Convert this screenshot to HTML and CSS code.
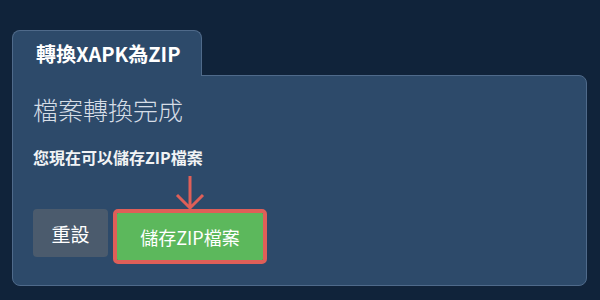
FILE: index.html
```html
<!DOCTYPE html>
<html lang="zh-Hant">
<head>
    <meta charset="UTF-8">
    <meta name="viewport" content="width=device-width, initial-scale=1.0">
    <title>轉換XAPK為ZIP</title>
    <link rel="stylesheet" href="styles.css">
</head>
<body>
    <div class="tabs">
        <div class="tab active">轉換XAPK為ZIP</div>
    </div>
    <div class="panel">
        <h2 class="done-title">檔案轉換完成</h2>
        <p class="done-desc">您現在可以儲存ZIP檔案</p>
        <div class="btn-row">
            <button type="button" class="btn btn-reset">重設</button>
            <div class="highlight">
                <svg class="hint-arrow" width="30" height="36" viewBox="0 0 30 36">
                    <path d="M15 1 V33 M2 20 L15 33 L28 20" fill="none" stroke="#df5f58" stroke-width="3" />
                </svg>
                <button type="button" class="btn btn-save">儲存ZIP檔案</button>
            </div>
        </div>
    </div>
</body>
</html>
```

FILE: styles.css
```css
body { margin: 0; padding: 30px 13px 0 12px; background-color: #10233a; font-family: "Noto Sans CJK TC", "Noto Sans", sans-serif; color: #fff; }
.tabs { display: flex; }
.tab {
    position: relative;
    z-index: 1;
    width: 165px;
    height: 45px;
    line-height: 45px;
    padding-left: 23px;
    background-color: #2d4a6a;
    border: 1px solid #4f6a8a;
    border-bottom: none;
    border-radius: 8px 8px 0 0;
    margin-bottom: -1px;
    font-size: 20px;
    font-weight: bold;
}
.panel {
    background-color: #2d4a6a;
    border: 1px solid #4f6a8a;
    border-radius: 0 8px 8px 8px;
    padding: 17px 20px 21px 20px;
}
.done-title { margin: 0; font-size: 25px; line-height: 32px; font-weight: 300; color: #d6dde6; }
.done-desc { margin: 21px 0 0 0; font-size: 16px; line-height: 22px; font-weight: bold; color: #f1f3f5; }
.btn-row { display: flex; align-items: flex-start; gap: 5px; margin-top: 41px; }
.btn { border: none; border-radius: 4px; color: #fff; font-family: inherit; font-size: 18px; cursor: pointer; display: flex; align-items: center; justify-content: center; }
.btn-reset { width: 75px; height: 48px; background-color: #4b5b6d; font-size: 19px; }
.highlight { position: relative; border: 4px solid #df5f58; border-radius: 5px; }
.btn-save { width: 146px; height: 47px; background-color: #5cb85c; border-radius: 1px; }
.hint-arrow { position: absolute; left: 50%; bottom: 100%; margin-left: -15px; margin-bottom: 2px; }
```
